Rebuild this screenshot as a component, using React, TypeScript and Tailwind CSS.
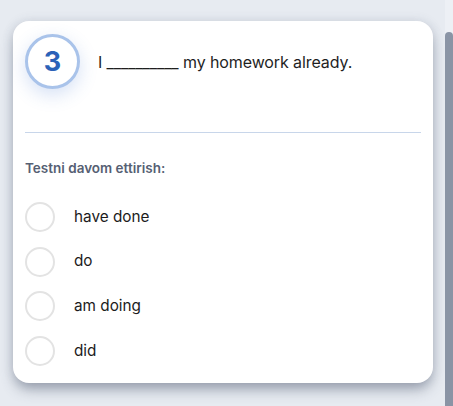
const options = ["have done", "do", "am doing", "did"];

export default function App() {
  return (
    <div
      className="flex h-[406px] w-[453px] overflow-hidden bg-[#e7ebf1]"
      style={{ fontFamily: "Inter, 'Noto Sans', sans-serif" }}
    >
      <div className="flex-1 pl-[13px] pr-3 pt-[21px]">
        <div className="h-[362px] rounded-2xl bg-white px-3 pt-[13px] shadow-[0_8px_14px_-2px_rgba(60,72,95,0.45),0_0_12px_rgba(60,72,95,0.12)]">
          <div className="flex items-center gap-[18px]">
            <div className="flex h-[55px] w-[55px] shrink-0 items-center justify-center rounded-full border-[3px] border-[#a9c3ea] bg-white shadow-[0_6px_18px_rgba(70,120,210,0.22)]">
              <span className="text-[27px] leading-none font-bold text-[#2c62b8]">3</span>
            </div>
            <p className="text-[16px] tracking-[-0.1px] text-[#1f1f1f]">
              I __________ my homework already.
            </p>
          </div>

          <div className="mt-[43px] h-px bg-[#c8d6ea]" />

          <p className="mt-[26px] text-[13.5px] leading-[18px] font-semibold text-[#566073]">
            Testni davom ettirish:
          </p>

          <div className="mt-[25px] flex flex-col gap-[14.7px]">
            {options.map((o) => (
              <label key={o} className="flex h-[30px] items-center gap-[19px]">
                <span className="h-[30px] w-[30px] shrink-0 rounded-full border-2 border-[#e3e3e3]" />
                <span className="text-[15.3px] text-[#1c1c1c]">{o}</span>
              </label>
            ))}
          </div>
        </div>
      </div>

      <div className="w-2 bg-[#edf0f5] pt-8">
        <div className="h-full rounded-t-[5px] bg-[#8a94a5]" />
      </div>
    </div>
  );
}
